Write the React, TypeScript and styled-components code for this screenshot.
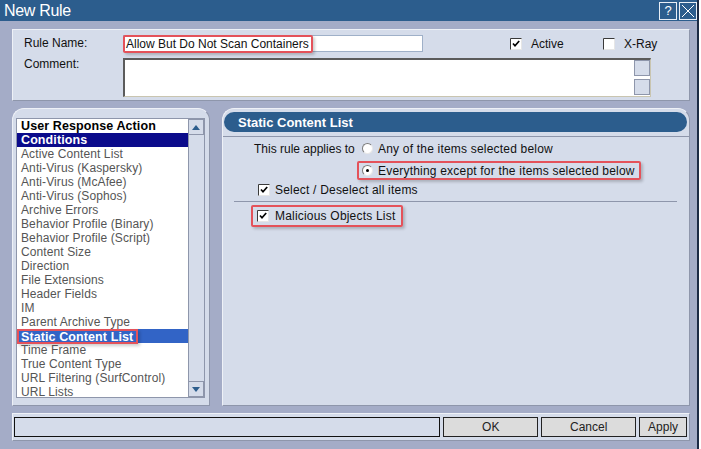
import React from 'react'
import styled, { createGlobalStyle } from 'styled-components'

const Global = createGlobalStyle`
  html, body {
    margin: 0;
    padding: 0;
    background: #ffffff;
  }
  body {
    font-family: "Liberation Sans", Arial, sans-serif;
    font-size: 12px;
    color: #111;
  }
`

const Window = styled.div`
  width: 697px;
  height: 449px;
  background: #a4acc7;
  border-right: 2px solid #1c2b45;
  display: flex;
  flex-direction: column;
  overflow: hidden;
`

const TitleBar = styled.div`
  height: 21px;
  background: #2c5d8d;
  color: #fff;
  display: flex;
  align-items: center;
  padding: 0 0 0 4px;
  font-size: 16px;
  flex-shrink: 0;
`

const TitleText = styled.div`
  flex: 1;
  letter-spacing: -0.3px;
`

const TitleButton = styled.div`
  width: 16px;
  height: 16px;
  border: 1px solid #e8eef6;
  margin-left: 2px;
  display: flex;
  align-items: center;
  justify-content: center;
  font-size: 13px;
  line-height: 1;
`

const Body = styled.div`
  flex: 1;
  display: flex;
  flex-direction: column;
  padding: 8px 7px 0 12px;
  gap: 7px;
`

const Panel = styled.div<{ $rounded?: boolean }>`
  background: #d5dcea;
  border: 1px solid #eef1f7;
  border-bottom-color: #8e96ab;
  border-right-color: #8e96ab;
  border-radius: ${(p) => (p.$rounded ? '12px 12px 0 0' : '0')};
  box-sizing: border-box;
`

const TopPanel = styled(Panel)`
  height: 72px;
  display: grid;
  grid-template-columns: 99px 1fr;
  grid-template-rows: 21px 1fr;
  padding: 5px 0 0 11px;
`

const FieldLabel = styled.div`
  font-size: 12px;
  line-height: 17px;
`

const NameRow = styled.div`
  display: flex;
  align-items: center;
  height: 17px;
`

const TextInput = styled.div`
  width: 300px;
  height: 17px;
  box-sizing: border-box;
  background: #fff;
  border: 1px solid #9fb0c8;
  display: flex;
  align-items: center;
`

const Highlight = styled.span<{ $pad?: string }>`
  display: inline-flex;
  align-items: center;
  border: 2px solid #e4525a;
  border-radius: 2px;
  box-shadow: 2px 2px 3px rgba(0, 0, 0, 0.2);
  padding: ${(p) => p.$pad || '0 2px'};
  box-sizing: border-box;
`

const Flags = styled.div`
  display: flex;
  align-items: center;
  margin-left: 87px;
`

const Flag = styled.div<{ $w: number }>`
  width: ${(p) => p.$w}px;
  display: flex;
  align-items: center;
  gap: 9px;
`

const CommentBox = styled.div`
  width: 528px;
  height: 39px;
  margin-top: 2px;
  box-sizing: border-box;
  background: #fff;
  border: 1px solid #c9c5b0;
  border-top: 2px solid #5b5b5b;
  border-left: 2px solid #5b5b5b;
  display: flex;
  justify-content: flex-end;
`

const CommentScroll = styled.div`
  width: 16px;
  display: flex;
  flex-direction: column;
  gap: 3px;
  padding: 0 0 1px 0;
`

const ScrollCell = styled.div`
  flex: 1;
  background: #d5dcea;
  border: 1px solid #8e96ab;
`

const Middle = styled.div`
  display: flex;
  gap: 12px;
  height: 298px;
`

const LeftPanel = styled(Panel)`
  width: 198px;
  padding: 9px 4px 7px 3px;
  display: flex;
`

const ListBox = styled.div`
  flex: 1;
  background: #fff;
  border: 1px solid #8e96ab;
  display: flex;
  overflow: hidden;
`

const Items = styled.div`
  flex: 1;
`

const Item = styled.div<{ $kind?: 'head' | 'active' | 'selected' }>`
  height: 14px;
  line-height: 14px;
  padding-left: 4px;
  font-size: ${(p) => (p.$kind ? '12.5px' : '12px')};
  white-space: nowrap;
  color: ${(p) => (p.$kind === 'head' ? '#000' : p.$kind ? '#fff' : '#555')};
  font-weight: ${(p) => (p.$kind ? 'bold' : 'normal')};
  background: ${(p) =>
    p.$kind === 'active' ? '#0b0b8b' : p.$kind === 'selected' ? '#3264c6' : 'transparent'};
  letter-spacing: 0.1px;
`

const ItemMark = styled.span`
  display: inline-block;
  border: 2px solid #e4525a;
  margin-left: -4px;
  padding: 0 3px 0 2px;
  height: 15px;
  line-height: 12px;
  box-sizing: border-box;
  box-shadow: 2px 2px 3px rgba(0, 0, 0, 0.2);
  vertical-align: top;
`

const ScrollBar = styled.div`
  width: 15px;
  background: #d5dcea;
  border-left: 1px solid #8e96ab;
  display: flex;
  flex-direction: column;
  justify-content: space-between;
`

const ScrollArrow = styled.div`
  height: 14px;
  border: 1px solid #8e96ab;
  border-left: none;
  display: flex;
  align-items: center;
  justify-content: center;
  background: #d5dcea;
`

const RightPanel = styled(Panel)`
  flex: 1;
  padding: 3px 2px 0 1px;
  display: flex;
  flex-direction: column;
`

const Header = styled.div`
  height: 20px;
  border-radius: 10px;
  background: #2c5d8d;
  color: #fff;
  font-weight: bold;
  font-size: 13px;
  display: flex;
  align-items: center;
  padding-left: 14px;
`

const HeaderRule = styled.div`
  height: 1px;
  background: #8e96ab;
  margin: 4px -2px 0 -1px;
`

const Content = styled.div`
  padding: 3px 10px 0 10px;
  display: flex;
  flex-direction: column;
`

const ApplyGrid = styled.div`
  display: grid;
  grid-template-columns: 108px auto;
  row-gap: 5px;
  padding-left: 20px;
  align-items: center;
`

const ApplyLabel = styled.span`
  white-space: nowrap;
`

const OptionText = styled.span`
  letter-spacing: 0.2px;
  white-space: nowrap;
`

const Option = styled.div<{ $indent?: number }>`
  display: flex;
  align-items: center;
  gap: 5px;
  height: 17px;
  margin-left: ${(p) => p.$indent || 0}px;
`

const RadioCircle = styled.span<{ $on?: boolean }>`
  width: 9px;
  height: 9px;
  border-radius: 50%;
  background: #fff;
  border: 1px solid #7b7b7b;
  border-right-color: #e8e8e8;
  border-bottom-color: #e8e8e8;
  display: inline-flex;
  align-items: center;
  justify-content: center;
  flex-shrink: 0;
  &::after {
    content: '';
    width: 3px;
    height: 3px;
    border-radius: 50%;
    background: ${(p) => (p.$on ? '#000' : 'transparent')};
  }
`

const CheckRow = styled.div<{ $top: number }>`
  display: flex;
  align-items: center;
  height: 17px;
  margin-top: ${(p) => p.$top}px;
  padding-left: 24px;
`

const Separator = styled.div`
  height: 1px;
  background: #8e96ab;
  margin: 3px 0 0 0;
`

const Bottom = styled(Panel)`
  height: 28px;
  display: flex;
  align-items: center;
  padding: 0 2px 0 1px;
  gap: 3px;
`

const Status = styled.div`
  width: 427px;
  height: 20px;
  box-sizing: border-box;
  border: 1px solid #111;
  background: #d5dcea;
`

const DialogButton = styled.div<{ $w: number }>`
  width: ${(p) => p.$w}px;
  height: 20px;
  box-sizing: border-box;
  border: 1px solid #222;
  background: #dcdcdc;
  display: flex;
  align-items: center;
  justify-content: center;
  font-size: 12px;
  color: #222;
`

function CheckBox({ on }: { on?: boolean }) {
  return (
    <svg width="12" height="12" viewBox="0 0 12 12" style={{ flexShrink: 0 }}>
      <rect x="0.5" y="0.5" width="11" height="11" fill="#fff" stroke="#e6e6e6" />
      <path d="M0.5 11.5V0.5H11.5" fill="none" stroke="#3a3a3a" />
      {on && <path d="M3 5.5l2 2.2L9.2 3" fill="none" stroke="#000" strokeWidth="1.7" />}
    </svg>
  )
}

function Arrow({ up }: { up?: boolean }) {
  return (
    <svg width="8" height="5" viewBox="0 0 8 5">
      <path d={up ? 'M0 5L4 0L8 5Z' : 'M0 0L8 0L4 5Z'} fill="#2c5d8d" />
    </svg>
  )
}

const conditions = [
  'Active Content List',
  'Anti-Virus (Kaspersky)',
  'Anti-Virus (McAfee)',
  'Anti-Virus (Sophos)',
  'Archive Errors',
  'Behavior Profile (Binary)',
  'Behavior Profile (Script)',
  'Content Size',
  'Direction',
  'File Extensions',
  'Header Fields',
  'IM',
  'Parent Archive Type',
  'Static Content List',
  'Time Frame',
  'True Content Type',
  'URL Filtering (SurfControl)',
  'URL Lists'
]

export default function App() {
  return (
    <Window>
      <Global />
      <TitleBar>
        <TitleText>New Rule</TitleText>
        <TitleButton>?</TitleButton>
        <TitleButton>
          <svg width="14" height="14" viewBox="0 0 14 14">
            <path d="M1 1L13 13M13 1L1 13" stroke="#fff" strokeWidth="1" />
          </svg>
        </TitleButton>
      </TitleBar>
      <Body>
        <TopPanel>
          <FieldLabel>Rule Name:</FieldLabel>
          <NameRow>
            <TextInput>
              <Highlight $pad="0 2px 0 1px" style={{ height: 18, marginLeft: -1 }}>
                Allow But Do Not Scan Containers
              </Highlight>
            </TextInput>
            <Flags>
              <Flag $w={93}>
                <CheckBox on />
                <span>Active</span>
              </Flag>
              <Flag $w={80}>
                <CheckBox />
                <span>X-Ray</span>
              </Flag>
            </Flags>
          </NameRow>
          <FieldLabel>Comment:</FieldLabel>
          <CommentBox>
            <CommentScroll>
              <ScrollCell />
              <ScrollCell />
            </CommentScroll>
          </CommentBox>
        </TopPanel>

        <Middle>
          <LeftPanel $rounded>
            <ListBox>
              <Items>
                <Item $kind="head">User Response Action</Item>
                <Item $kind="active">Conditions</Item>
                {conditions.map((c) =>
                  c === 'Static Content List' ? (
                    <Item key={c} $kind="selected">
                      <ItemMark>{c}</ItemMark>
                    </Item>
                  ) : (
                    <Item key={c}>{c}</Item>
                  )
                )}
              </Items>
              <ScrollBar>
                <ScrollArrow>
                  <Arrow up />
                </ScrollArrow>
                <ScrollArrow>
                  <Arrow />
                </ScrollArrow>
              </ScrollBar>
            </ListBox>
          </LeftPanel>

          <RightPanel $rounded>
            <Header>Static Content List</Header>
            <HeaderRule />
            <Content>
              <ApplyGrid>
                <ApplyLabel>This rule applies to</ApplyLabel>
                <Option>
                  <RadioCircle />
                  <OptionText>Any of the items selected below</OptionText>
                </Option>
                <span />
                <Option $indent={-5}>
                  <Highlight $pad="0 4px 0 3px" style={{ height: 19, gap: 5 }}>
                    <RadioCircle $on />
                    <OptionText>Everything except for the items selected below</OptionText>
                  </Highlight>
                </Option>
              </ApplyGrid>
              <CheckRow $top={2}>
                <CheckBox on />
                <OptionText style={{ marginLeft: 5 }}>Select / Deselect all items</OptionText>
              </CheckRow>
              <Separator />
              <CheckRow $top={5}>
                <Highlight $pad="0 6px 0 4px" style={{ height: 22, gap: 6, marginLeft: -7 }}>
                  <CheckBox on />
                  <OptionText>Malicious Objects List</OptionText>
                </Highlight>
              </CheckRow>
            </Content>
          </RightPanel>
        </Middle>

        <Bottom>
          <Status />
          <DialogButton $w={95}>OK</DialogButton>
          <DialogButton $w={95}>Cancel</DialogButton>
          <DialogButton $w={48}>Apply</DialogButton>
        </Bottom>
      </Body>
    </Window>
  )
}
